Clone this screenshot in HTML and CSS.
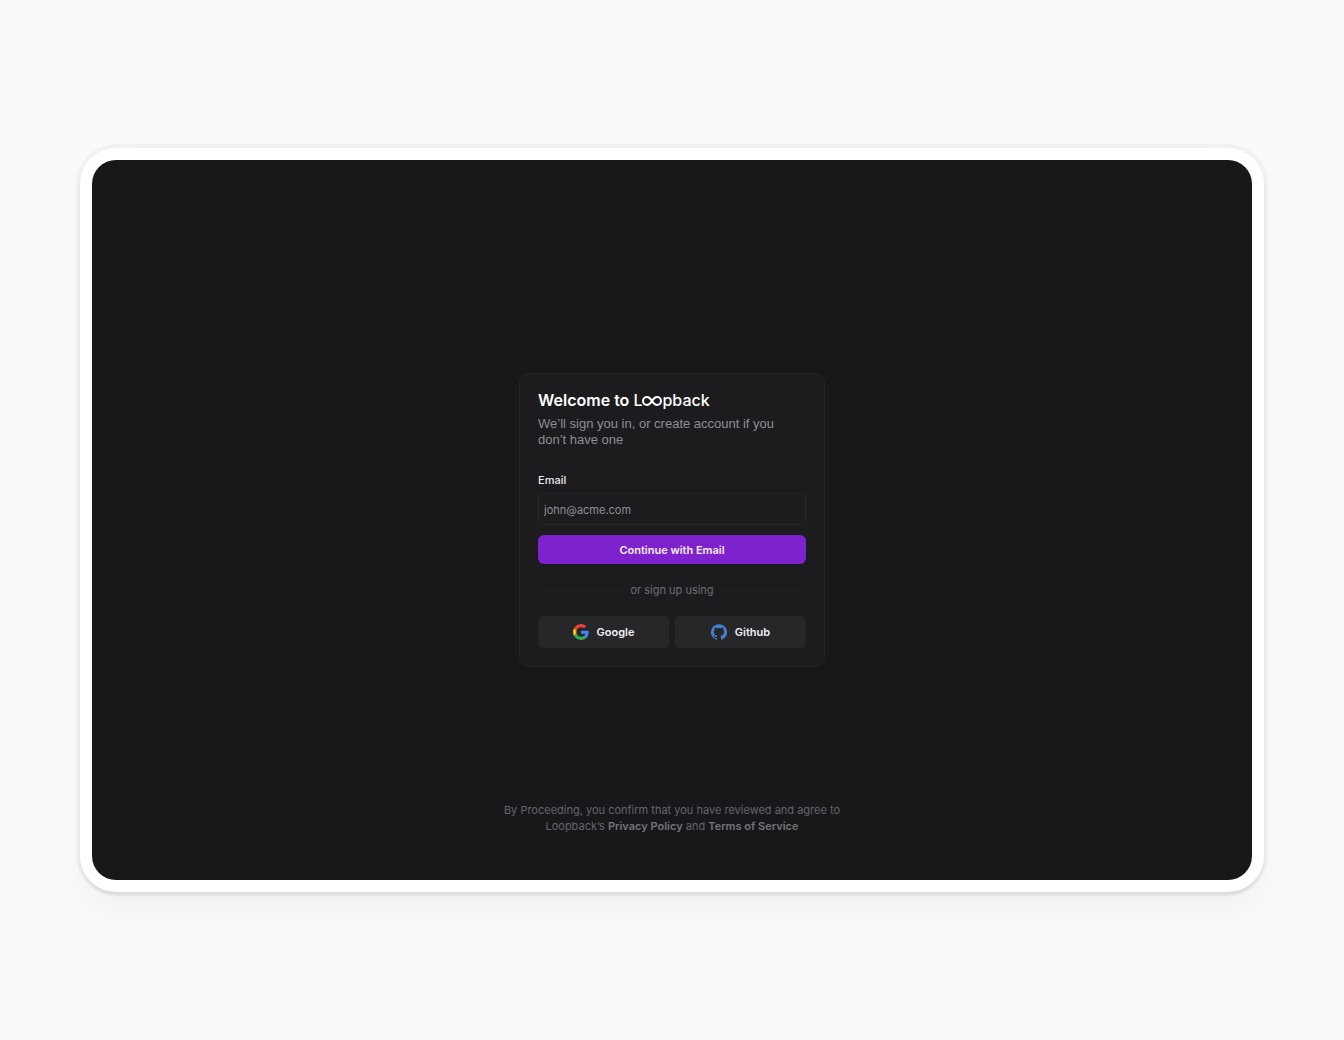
FILE: index.html
```html
<!DOCTYPE html>
<html lang="en">
<head>
<meta charset="utf-8">
<meta name="viewport" content="width=device-width, initial-scale=1">
<title>Sign in to Loopback</title>
<link rel="stylesheet" href="styles.css">
</head>
<body>
<div class="frame">
  <div class="screen">
    <main class="card">
      <h1 class="title">Welcome to <span class="brand">L<svg class="loop" viewBox="0 0 20 10" aria-hidden="true"><path d="M10 5C8.500 2.500 7 1 5 1a4 4 0 0 0 0 8C7 9 8.500 7.500 10 5S13 1 15 1a4 4 0 0 1 0 8C13 9 11.500 7.500 10 5Z"/></svg>pback</span></h1>
      <p class="intro">We’ll sign you in, or create account if you don’t have one</p>
      <form class="form">
        <label class="label" for="email">Email</label>
        <input class="input" id="email" type="email" placeholder="john@acme.com">
        <button class="submit" type="submit">Continue with Email</button>
      </form>
      <div class="divider">or sign up using</div>
      <div class="providers">
        <button class="provider" type="button">
          <svg class="icon" viewBox="0 0 24 24" aria-hidden="true">
            <path fill="#4285f4" d="M23.500 12.300c0-.8-.1-1.600-.2-2.300H12v4.500h6.500a5.500 5.500 0 0 1-2.400 3.600v3h3.900c2.200-2.100 3.500-5.100 3.500-8.800Z"/>
            <path fill="#34a853" d="M12 24c3.200 0 6-1.100 8-2.900l-3.900-3c-1.100.7-2.500 1.200-4.100 1.200-3.100 0-5.800-2.100-6.700-5h-4v3.100A12 12 0 0 0 12 24Z"/>
            <path fill="#fbbc05" d="M5.300 14.300a7.200 7.200 0 0 1 0-4.600V6.600h-4a12 12 0 0 0 0 10.800Z"/>
            <path fill="#ea4335" d="M12 4.700c1.800 0 3.300.6 4.600 1.800L20 3.100A12 12 0 0 0 1.300 6.600l4 3.100c.9-2.900 3.600-5 6.700-5Z"/>
          </svg>
          Google
        </button>
        <button class="provider" type="button">
          <svg class="icon" viewBox="0 0 24 24" aria-hidden="true">
            <path fill="#4380d0" d="M12 .3a12 12 0 0 0-3.800 23.400c.6.1.8-.3.8-.6v-2c-3.300.7-4-1.600-4-1.600-.6-1.400-1.400-1.800-1.400-1.800-1-.7.1-.7.1-.7 1.200 0 1.900 1.200 1.900 1.200 1 1.800 2.800 1.300 3.500 1 0-.8.4-1.300.7-1.600-2.700-.3-5.500-1.300-5.500-6 0-1.200.5-2.300 1.300-3.100-.2-.4-.6-1.600 0-3.200 0 0 1-.3 3.400 1.200a11.500 11.500 0 0 1 6 0c2.300-1.500 3.300-1.200 3.300-1.200.6 1.600.2 2.800 0 3.200.9.800 1.300 1.900 1.300 3.200 0 4.600-2.800 5.600-5.500 5.900.5.400.9 1 .9 2.200v3.300c0 .3.1.7.8.6A12 12 0 0 0 12 .3"/>
          </svg>
          Github
        </button>
      </div>
    </main>
    <footer class="legal">By Proceeding, you confirm that you have reviewed and agree to Loopback’s <a href="#privacy">Privacy Policy</a> and <a href="#terms">Terms of Service</a></footer>
  </div>
</div>
</body>
</html>
```
FILE: styles.css
```css
* { box-sizing: border-box; }

body {
  margin: 0;
  min-height: 100vh;
  padding: 40px 80px;
  display: grid;
  align-items: center;
  background: #fafafa;
  font-family: Inter, "Liberation Sans", sans-serif;
  font-size: 11px;
  line-height: 16px;
}

.frame {
  padding: 12px;
  border-radius: 36px;
  background: #fff;
  box-shadow: 0 0 0 4px rgba(0, 0, 0, 0.03), 0 3px 3px rgba(0, 0, 0, 0.06), 0 16px 28px rgba(0, 0, 0, 0.04);
}

.screen {
  aspect-ratio: 29 / 18;
  padding: 46px 20px;
  display: grid;
  grid-template-rows: 1fr auto 1fr;
  justify-items: center;
  border-radius: 24px;
  background: #18181a;
}

.card {
  grid-row: 2;
  width: 100%;
  max-width: 306px;
  padding: 18px;
  border: 1px solid #242427;
  border-radius: 10px;
  background: #1c1c1e;
}

.title {
  margin: 0;
  font-size: 16px;
  line-height: 16px;
  font-weight: 600;
  color: #fff;
}

.brand { font-weight: 500; }

.loop {
  width: 20px;
  height: 10px;
  vertical-align: baseline;
  fill: none;
  stroke: currentColor;
  stroke-width: 2;
}

.intro {
  max-width: 256px;
  margin: 8px 0 24px;
  font-family: "Liberation Sans", Arial, sans-serif;
  font-size: 13px;
  color: #8f8f94;
}

.form { display: grid; }

.label {
  margin-bottom: 5px;
  font-weight: 500;
  color: #e8e8ea;
}

.input {
  width: 100%;
  height: 32px;
  padding: 1px 5px 0;
  border: 1px solid #252528;
  border-radius: 4px;
  background: transparent;
  font: inherit;
  color: #e8e8ea;
}

.input::placeholder { color: #8f8f94; opacity: 1; }

.submit {
  height: 29px;
  margin-top: 10px;
  padding: 0;
  border: 0;
  border-radius: 6px;
  background: #7e22ce;
  font: inherit;
  font-weight: 600;
  color: #f6ecff;
}

.divider {
  margin: 18px 0;
  display: flex;
  align-items: center;
  gap: 7px;
  color: #6c6c71;
}

.divider::before,
.divider::after {
  content: "";
  flex: 1;
  height: 1px;
  background: #232326;
}

.providers {
  display: grid;
  grid-template-columns: 1fr 1fr;
  gap: 6px;
}

.provider {
  height: 32px;
  padding: 0;
  display: flex;
  align-items: center;
  justify-content: center;
  gap: 8px;
  border: 0;
  border-radius: 5px;
  background: #27272a;
  font: inherit;
  font-weight: 600;
  color: #f0f0f2;
}

.icon {
  width: 16px;
  height: 16px;
}

.legal {
  grid-row: 3;
  align-self: end;
  max-width: 360px;
  text-align: center;
  color: #656569;
}

.legal a {
  font-weight: 600;
  color: #737378;
  text-decoration: none;
}
```
